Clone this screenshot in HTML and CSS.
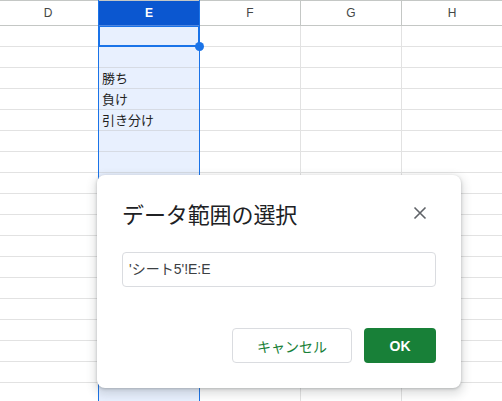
FILE: index.html
```html
<!DOCTYPE html>
<html lang="ja">
<head>
<meta charset="utf-8">
<title>データ範囲の選択</title>
<link rel="stylesheet" href="styles.css">
</head>
<body>
<div class="sheet">
  <div class="col col-d">
    <div class="hd">D</div>
    <div class="cell"></div><div class="cell"></div><div class="cell"></div><div class="cell"></div><div class="cell"></div><div class="cell"></div><div class="cell"></div><div class="cell"></div><div class="cell"></div><div class="cell"></div><div class="cell"></div><div class="cell"></div><div class="cell"></div><div class="cell"></div><div class="cell"></div><div class="cell"></div><div class="cell"></div><div class="cell"></div>
  </div>
  <div class="col col-e">
    <div class="hd">E</div>
    <div class="cell"></div><div class="cell"></div><div class="cell">勝ち</div><div class="cell">負け</div><div class="cell">引き分け</div><div class="cell"></div><div class="cell"></div><div class="cell"></div><div class="cell"></div><div class="cell"></div><div class="cell"></div><div class="cell"></div><div class="cell"></div><div class="cell"></div><div class="cell"></div><div class="cell"></div><div class="cell"></div><div class="cell"></div>
    <div class="active"></div>
    <div class="handle"></div>
  </div>
  <div class="col">
    <div class="hd">F</div>
    <div class="cell"></div><div class="cell"></div><div class="cell"></div><div class="cell"></div><div class="cell"></div><div class="cell"></div><div class="cell"></div><div class="cell"></div><div class="cell"></div><div class="cell"></div><div class="cell"></div><div class="cell"></div><div class="cell"></div><div class="cell"></div><div class="cell"></div><div class="cell"></div><div class="cell"></div><div class="cell"></div>
  </div>
  <div class="col">
    <div class="hd">G</div>
    <div class="cell"></div><div class="cell"></div><div class="cell"></div><div class="cell"></div><div class="cell"></div><div class="cell"></div><div class="cell"></div><div class="cell"></div><div class="cell"></div><div class="cell"></div><div class="cell"></div><div class="cell"></div><div class="cell"></div><div class="cell"></div><div class="cell"></div><div class="cell"></div><div class="cell"></div><div class="cell"></div>
  </div>
  <div class="col">
    <div class="hd">H</div>
    <div class="cell"></div><div class="cell"></div><div class="cell"></div><div class="cell"></div><div class="cell"></div><div class="cell"></div><div class="cell"></div><div class="cell"></div><div class="cell"></div><div class="cell"></div><div class="cell"></div><div class="cell"></div><div class="cell"></div><div class="cell"></div><div class="cell"></div><div class="cell"></div><div class="cell"></div><div class="cell"></div>
  </div>
</div>

<div class="dialog">
  <div class="dlg-head">
    <div class="dlg-title">データ範囲の選択</div>
    <button class="close" aria-label="閉じる">
      <svg width="14" height="14" viewBox="0 0 14 14"><path d="M1.5 1.5 L12.5 12.5 M12.5 1.5 L1.5 12.5" stroke="#5f6368" stroke-width="1.6" fill="none"/></svg>
    </button>
  </div>
  <div class="range-input">'シート5'!E:E</div>
  <div class="actions">
    <button class="btn btn-cancel">キャンセル</button>
    <button class="btn btn-ok">OK</button>
  </div>
</div>
</body>
</html>
```
FILE: styles.css
```css
html, body {
  margin: 0;
  padding: 0;
  background: #ffffff;
  overflow: hidden;
}
body {
  width: 502px;
  height: 401px;
  position: relative;
  font-family: "Liberation Sans", "Noto Sans CJK JP", sans-serif;
}
.sheet {
  display: flex;
  margin-left: -2px;
}
.col {
  width: 101px;
  flex: none;
  box-sizing: border-box;
  border-right: 1px solid #e2e2e2;
  position: relative;
}
.hd {
  height: 26px;
  box-sizing: border-box;
  border-top: 1px solid #c4c7c5;
  border-bottom: 1px solid #c4c7c5;
  margin-right: -1px;
  border-right: 1px solid #c4c7c5;
  font-size: 12px;
  line-height: 24px;
  text-align: center;
  color: #444746;
  position: relative;
  z-index: 1;
}
.cell {
  height: 21px;
  box-sizing: border-box;
  border-bottom: 1px solid #e2e2e2;
  font-size: 13px;
  line-height: 20px;
  padding-left: 3px;
  color: #000000;
  font-family: "Noto Sans CJK JP", "Liberation Sans", sans-serif;
  white-space: nowrap;
}
.col-e {
  width: 102px;
  margin-left: -1px;
  border-left: 1px solid #1a73e8;
  border-right: 1px solid #1a73e8;
  background: #e8f0fe;
  z-index: 2;
}
.col-e .hd {
  background: #0b57d0;
  color: #ffffff;
  border-top-color: #c4c7c5;
  border-bottom-color: #4f86e0;
  border-right: none;
  margin-right: 0;
  font-weight: bold;
}
.col-e .cell {
  border-bottom-color: #d6dbe4;
  padding-left: 3px;
  color: #1f1f1f;
}
.active {
  position: absolute;
  left: -1px;
  right: -1px;
  top: 25px;
  height: 22px;
  box-sizing: border-box;
  border: 2px solid #1a73e8;
}
.handle {
  position: absolute;
  right: -5px;
  top: 42px;
  width: 9px;
  height: 9px;
  border-radius: 50%;
  background: #1a73e8;
  z-index: 3;
}
.dialog {
  position: absolute;
  left: 97px;
  top: 175px;
  width: 364px;
  height: 213px;
  box-sizing: border-box;
  padding: 24px 25px 25px 25px;
  background: #ffffff;
  border-radius: 8px;
  box-shadow: 0 1px 3px rgba(60, 64, 67, 0.3), 0 4px 8px 3px rgba(60, 64, 67, 0.15);
  z-index: 10;
  display: flex;
  flex-direction: column;
  font-family: "Noto Sans CJK JP", "Liberation Sans", sans-serif;
}
.dlg-head {
  display: flex;
  align-items: center;
  justify-content: space-between;
  height: 28px;
}
.dlg-title {
  font-size: 22px;
  line-height: 28px;
  color: #202124;
  font-weight: 400;
  letter-spacing: -0.1px;
}
.close {
  width: 24px;
  height: 24px;
  margin-right: 4px;
  padding: 0;
  border: none;
  background: transparent;
  display: flex;
  align-items: center;
  justify-content: center;
}
.range-input {
  margin-top: 25px;
  height: 35px;
  box-sizing: border-box;
  border: 1px solid #dadce0;
  border-radius: 4px;
  padding-left: 6px;
  font-size: 14px;
  line-height: 33px;
  color: #3c4043;
  font-family: "Liberation Sans", "Noto Sans CJK JP", sans-serif;
}
.actions {
  margin-top: auto;
  display: flex;
  justify-content: flex-end;
  gap: 12px;
}
.btn {
  height: 35px;
  box-sizing: border-box;
  border-radius: 4px;
  font-size: 14px;
  font-family: "Noto Sans CJK JP", "Liberation Sans", sans-serif;
  padding: 0;
}
.btn-cancel {
  width: 120px;
  background: #ffffff;
  border: 1px solid #dadce0;
  color: #188038;
}
.btn-ok {
  width: 72px;
  background: #188038;
  border: none;
  color: #ffffff;
  font-weight: bold;
  font-family: "Liberation Sans", sans-serif;
}
```
